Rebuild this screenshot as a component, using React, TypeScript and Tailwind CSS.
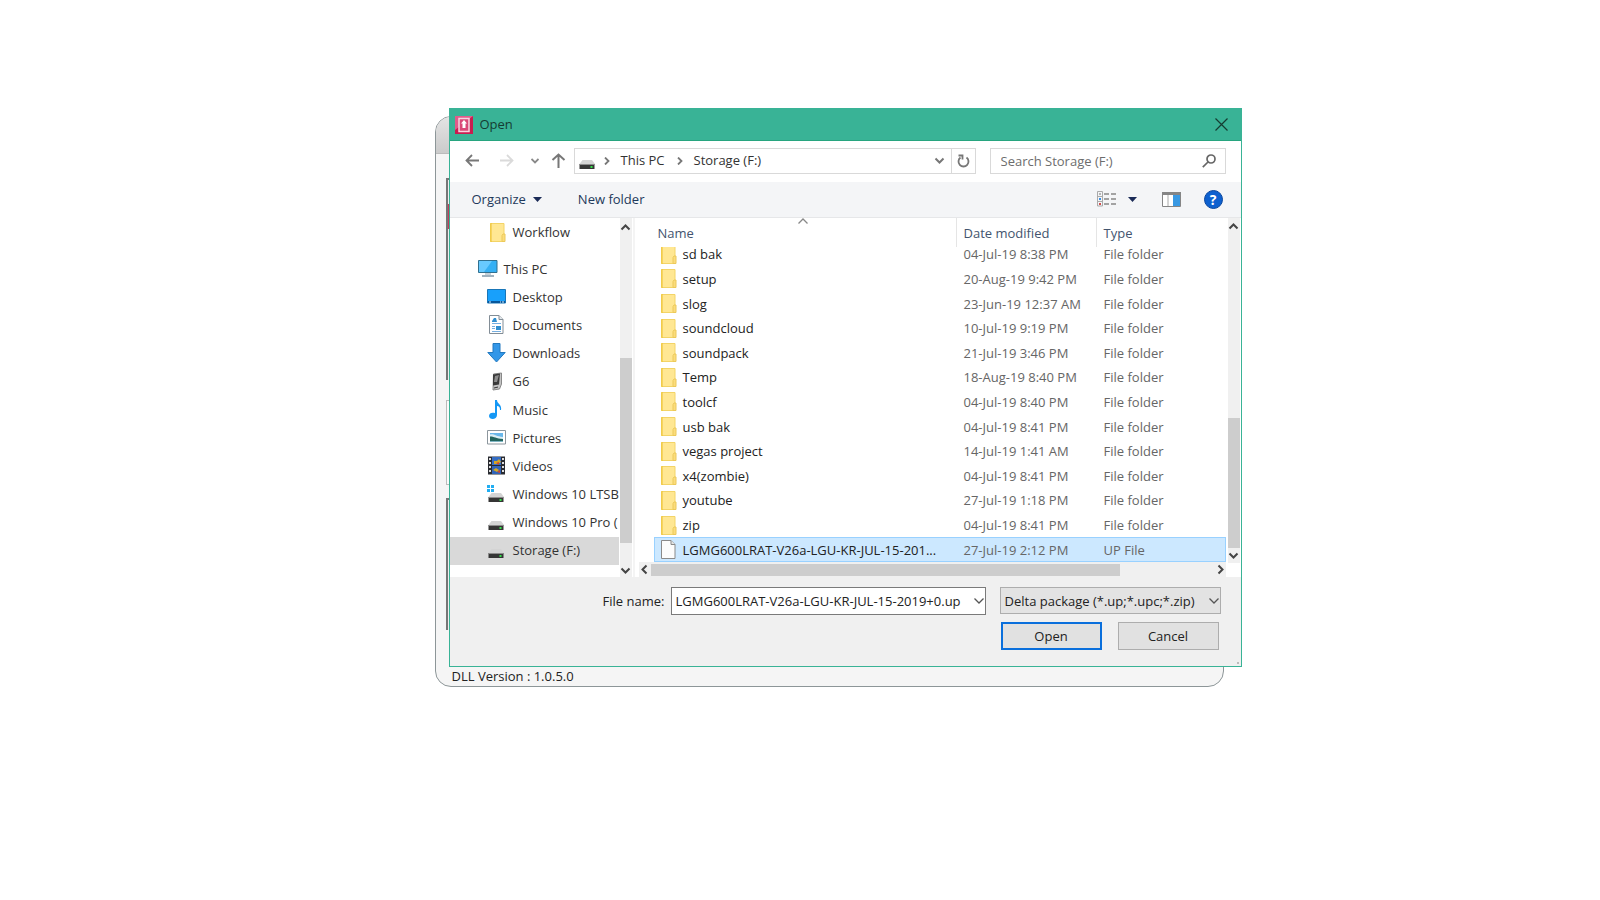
import type { ReactNode } from "react";

const NAV_ITEMS = [
  { label: "This PC", icon: "pc", root: true },
  { label: "Desktop", icon: "desktop" },
  { label: "Documents", icon: "document" },
  { label: "Downloads", icon: "download" },
  { label: "G6", icon: "phone" },
  { label: "Music", icon: "music" },
  { label: "Pictures", icon: "picture" },
  { label: "Videos", icon: "video" },
  { label: "Windows 10 LTSB", icon: "windrive" },
  { label: "Windows 10 Pro (", icon: "drive" },
  { label: "Storage (F:)", icon: "drive", selected: true },
];

const FILES = [
  ["sd bak", "04-Jul-19 8:38 PM"],
  ["setup", "20-Aug-19 9:42 PM"],
  ["slog", "23-Jun-19 12:37 AM"],
  ["soundcloud", "10-Jul-19 9:19 PM"],
  ["soundpack", "21-Jul-19 3:46 PM"],
  ["Temp", "18-Aug-19 8:40 PM"],
  ["toolcf", "04-Jul-19 8:40 PM"],
  ["usb bak", "04-Jul-19 8:41 PM"],
  ["vegas project", "14-Jul-19 1:41 AM"],
  ["x4(zombie)", "04-Jul-19 8:41 PM"],
  ["youtube", "27-Jul-19 1:18 PM"],
  ["zip", "04-Jul-19 8:41 PM"],
];

function FolderIcon() {
  return (
    <svg width="16" height="19" viewBox="0 0 16 19" className="shrink-0">
      <path d="M.5.5h13.500v18H.5z" fill="#ffe793" stroke="#f3d467" />
      <path d="M1 0v19" stroke="#eec22f" />
      <path d="M12 18.500v-6l1-1.500h2v7.500z" fill="#fbdc7c" stroke="#ecc95a" />
    </svg>
  );
}

function FileIcon() {
  return (
    <svg width="16" height="19" viewBox="0 0 16 19" className="shrink-0">
      <path d="M.5.5h9.500l4 4v14H.5z" fill="#fcfcfc" stroke="#8a8a8a" />
      <path d="M10 .5v4h4" fill="#e4e4e4" stroke="#8a8a8a" />
    </svg>
  );
}

function DriveIcon({ windows = false }: { windows?: boolean }) {
  return (
    <svg width="18" height="18" viewBox="0 0 18 18" className="shrink-0">
      {windows && <path d="M0 0h3v3H0zM4 0h3v3H4zM0 4h3v3H0zM4 4h3v3H4z" fill="#22aef2" />}
      <path d="M4.500 8h9.500l3 4H1.500z" fill="#d4d4d4" />
      <path d="M1.500 12h15v5h-15z" fill="#353535" />
      <path d="M1.500 12h15v1h-15z" fill="#8c8c8c" />
      <path d="M12.500 14h2v2h-2z" fill="#35e04a" />
    </svg>
  );
}

function NavIcon({ name }: { name: string }) {
  switch (name) {
    case "folder":
      return <FolderIcon />;
    case "drive":
      return <DriveIcon />;
    case "windrive":
      return <DriveIcon windows />;
    case "pc":
      return (
        <svg width="20" height="18" viewBox="0 0 20 18" className="shrink-0">
          <path d="M.5.5h18.500v12H.5z" fill="#35b0f4" stroke="#31708f" />
          <path d="M1 1h13L6 12H1z" fill="#68caff" />
          <path d="M7 13h6v2H7z" fill="#c5d0d8" />
          <path d="M4 16h12" stroke="#8199aa" strokeWidth="1.500" />
        </svg>
      );
    case "desktop":
      return (
        <svg width="19" height="15" viewBox="0 0 19 15" className="shrink-0">
          <path d="M.5.5h18v13.500H.5z" fill="#18a0fb" stroke="#1976b8" />
          <path d="M1 12h17v2H1z" fill="#07569a" />
          <path d="M2 13h2M13 13h1M15 13h2" stroke="#d6efff" />
        </svg>
      );
    case "document":
      return (
        <svg width="19" height="19" viewBox="0 0 19 19" className="shrink-0">
          <path d="M2.500.5h9.500l4 4v14H2.500z" fill="#fff" stroke="#828d96" />
          <path d="M12 .5v4h4" fill="#e3e8ec" stroke="#828d96" />
          <path d="M5 6l2-3h2l1 4H5zM9 11h5v4H9z" fill="#318fd0" />
          <path d="M5 8.500h9M5 11.500h3M5 13.500h3M5 16.500h9" stroke="#75aee0" />
        </svg>
      );
    case "download":
      return (
        <svg width="19" height="20" viewBox="0 0 19 20" className="shrink-0">
          <path d="M6 .5h7v9h5.200L9.500 19 .8 9.500H6z" fill="#3397e8" stroke="#2279c0" />
        </svg>
      );
    case "phone":
      return (
        <svg width="19" height="19" viewBox="0 0 19 19" className="shrink-0">
          <path d="M6.500 2l8-1v11l-2 5-6.500 1z" fill="#c4c4c4" stroke="#888" />
          <path d="M6 2.500l7-1-1 11-6 1z" fill="#3a3a3a" />
          <path d="M8 4l4-1-2 7H7z" fill="#8d8d8d" />
          <path d="M7 16l4-1" stroke="#333" />
        </svg>
      );
    case "music":
      return (
        <svg width="19" height="19" viewBox="0 0 19 19" className="shrink-0">
          <path d="M8 0h2c0 4 5 4 4 10h-1c0-3-1-4-3-4v9c0 5-8 5-8 1 0-3 3-4 6-3z" fill="#1598f5" />
        </svg>
      );
    case "picture":
      return (
        <svg width="19" height="15" viewBox="0 0 19 15" className="shrink-0">
          <path d="M.5.5h18v13.500H.5z" fill="#fff" stroke="#8c969d" />
          <path d="M3 3h13v9H3z" fill="#69b7ea" />
          <path d="M3 4.500c4-1 6 2 13 2.500v2H3z" fill="#dbeef4" />
          <path d="M3 6.500c4 0 6 2 13 2.500v3H3z" fill="#23655e" />
          <path d="M3 11h13v1H3z" fill="#7fb6c4" />
        </svg>
      );
    default:
      return (
        <svg width="19" height="19" viewBox="0 0 19 19" className="shrink-0">
          <path d="M1 .5h17v18H1z" fill="#292b31" />
          <path d="M5 1h9v8H5z" fill="#356ec5" />
          <path d="M5 10h9v8H5z" fill="#3064ba" />
          <path d="M7 5h3l2-2 2 3-3 2H7zM6 14l3-2 3 2-2 2z" fill="#d3a826" />
          <path d="M9 7l3-1v3zM10 16l3-2v3z" fill="#d34333" />
          <path d="M3 2v16M16 2v16" stroke="#ddd" strokeWidth="2" strokeDasharray="2 2" />
        </svg>
      );
  }
}

function Chevron({ dir, className = "" }: { dir: "up" | "down" | "left" | "right"; className?: string }) {
  const paths = {
    up: "M1.500 7.500 5.500 3.500 9.500 7.500",
    down: "M1.500 3.500 5.500 7.500 9.500 3.500",
    left: "M7.500 1.500 3.500 5.500 7.500 9.500",
    right: "M3.500 1.500 7.500 5.500 3.500 9.500",
  };
  return (
    <svg width="11" height="11" viewBox="0 0 11 11" fill="none" stroke="currentColor" strokeWidth="2" className={`shrink-0 ${className}`}>
      <path d={paths[dir]} />
    </svg>
  );
}

function IconButton({ label, className = "", children }: { label: string; className?: string; children: ReactNode }) {
  return (
    <button type="button" aria-label={label} className={`flex items-center justify-center ${className}`}>
      {children}
    </button>
  );
}

function BackWindow() {
  return (
    <div className="absolute top-2 right-[18px] -bottom-5 -left-[14px] flex flex-col overflow-hidden rounded-2xl border border-[#8d9698] bg-[#f5f5f5]">
      <div className="h-[37px] border-b border-[#bbb] bg-linear-to-b from-[#e4e4e4] to-[#cbcbcb]" />
      <div className="flex flex-1 flex-col px-[10px] pt-6">
        <div className="h-[202px] border-2 border-r-0 border-b-0 border-[#777] bg-[#eee] pt-6">
          <div className="h-[25px] bg-[#c43d5c]" />
        </div>
        <div className="mt-5 h-[85px] border border-[#bbb] bg-[#fafafa]" />
        <div className="mt-[13px] h-[132px] border-2 border-r-0 border-b-0 border-[#777] bg-[#eee]" />
      </div>
      <p className="h-[18px] pl-4 leading-4 text-[#222]">DLL Version : 1.0.5.0</p>
    </div>
  );
}

function TitleBar() {
  return (
    <div className="flex h-8 items-center border-b border-[#27a57f] bg-[#39b396] pl-[5px] text-[#153c32]">
      <svg width="18" height="18" viewBox="0 0 18 18">
        <path d="M0 0h18v18H0z" fill="#c91c50" />
        <path d="M0 0h18L0 14z" fill="#e25b8b" />
        <path d="M4 2.500h10v13H4z" fill="#d94978" stroke="#f6d5e0" strokeWidth="1.500" />
        <path d="M9 4l3 3.500h-1.500V12h-3V7.500H6z" fill="#fff" />
      </svg>
      <h1 className="ml-[7px] flex-1 pb-[2px]">Open</h1>
      <IconButton label="Close" className="h-full w-[38px]">
        <svg width="13" height="13" viewBox="0 0 13 13" fill="none" stroke="currentColor" strokeWidth="1.200">
          <path d="M.5.5l12 12M12.500.5l-12 12" />
        </svg>
      </IconButton>
    </div>
  );
}

function AddressRow() {
  return (
    <div className="flex h-[41px] items-center px-[15px] pb-[2px] text-[#777]">
      <IconButton label="Back" className="w-4">
        <svg width="15" height="13" viewBox="0 0 15 13" fill="none" stroke="#777" strokeWidth="1.800">
          <path d="M7 1L1.500 6.500 7 12M1.500 6.500H14" />
        </svg>
      </IconButton>
      <IconButton label="Forward" className="ml-[18px] w-4">
        <svg width="15" height="13" viewBox="0 0 15 13" fill="none" stroke="#dadada" strokeWidth="1.800">
          <path d="M8 1l5.500 5.500L8 12M13.500 6.500H1" />
        </svg>
      </IconButton>
      <IconButton label="Recent locations" className="ml-3 w-4">
        <svg width="8" height="6" viewBox="0 0 8 6" fill="none" stroke="#888" strokeWidth="1.800">
          <path d="M.5 1L4 4.500 7.500 1" />
        </svg>
      </IconButton>
      <IconButton label="Up" className="ml-2 w-4">
        <svg width="15" height="15" viewBox="0 0 15 15" fill="none" stroke="#777" strokeWidth="2">
          <path d="M1.500 7L7.500 1.500 13.500 7M7.500 2v13" />
        </svg>
      </IconButton>
      <div className="ml-[7px] flex h-[26px] flex-1 items-center border border-[#d9d9d9] pl-[3px] text-[#333]">
        <DriveIcon />
        <svg width="6" height="8" viewBox="0 0 6 8" fill="none" stroke="#777" strokeWidth="1.800" className="ml-2">
          <path d="M1 .5L4.500 4 1 7.500" />
        </svg>
        <a href="#this-pc" className="ml-[11px] pb-[2px]">This PC</a>
        <svg width="6" height="8" viewBox="0 0 6 8" fill="none" stroke="#777" strokeWidth="1.800" className="ml-3">
          <path d="M1 .5L4.500 4 1 7.500" />
        </svg>
        <a href="#storage" className="ml-[11px] flex-1 pb-[2px]">Storage (F:)</a>
        <IconButton label="Previous locations" className="h-full w-[22px]">
          <Chevron dir="down" className="text-[#777]" />
        </IconButton>
        <IconButton label="Refresh" className="h-full w-6 border-l border-[#d9d9d9]">
          <svg width="13" height="14" viewBox="0 0 13 14" fill="none" stroke="#777" strokeWidth="1.800">
            <path d="M9.500 3.500a5 5 0 1 1-6 0M1.500 1.500h4v4" />
          </svg>
        </IconButton>
      </div>
      <div className="ml-[14px] flex h-[26px] w-[236px] items-center border border-[#d9d9d9] pr-[9px] pl-[10px]">
        <input aria-label="Search Storage (F:)" placeholder="Search Storage (F:)" className="min-w-0 flex-1 outline-none placeholder:text-[#6d6d6d]" />
        <svg width="14" height="14" viewBox="0 0 14 14" fill="none" stroke="#666" strokeWidth="1.700">
          <circle cx="9" cy="5" r="4" />
          <path d="M6 8L.8 13.200" />
        </svg>
      </div>
    </div>
  );
}

function Toolbar() {
  return (
    <div className="flex h-9 items-center border-b border-[#e6e7e9] bg-[#f4f5f7] pr-[18px] pb-px pl-[22px] text-[#1e395b]">
      <button type="button" className="flex items-center">
        Organize
        <svg width="9" height="5" viewBox="0 0 9 5" className="ml-[7px]">
          <path d="M0 0h9L4.500 5z" fill="#1b2b57" />
        </svg>
      </button>
      <button type="button" className="ml-9">New folder</button>
      <IconButton label="Change your view" className="ml-auto">
        <svg width="20" height="16" viewBox="0 0 20 16" fill="none">
          <path d="M.5.5h5v14.500h-5zM.5 5.500h5M.5 10.500h5" stroke="#aaa" />
          <path d="M3 2v2" stroke="#777" />
          <path d="M3 7v2" stroke="#398ee5" strokeWidth="2" />
          <path d="M3 12v2" stroke="#d04e4e" strokeWidth="2" />
          <path d="M7 3h5M14 3h5M7 8h5M14 8h5M7 13h5M14 13h5" stroke="#888" strokeWidth="1.300" />
        </svg>
      </IconButton>
      <IconButton label="More options" className="ml-[11px]">
        <svg width="9" height="5" viewBox="0 0 9 5">
          <path d="M0 0h9L4.500 5z" fill="#1b2b57" />
        </svg>
      </IconButton>
      <IconButton label="Show the preview pane" className="ml-[25px]">
        <svg width="19" height="15" viewBox="0 0 19 15">
          <path d="M.5.5h18v14H.5z" fill="#fff" stroke="#858585" />
          <path d="M0 0h19v3H0z" fill="#858585" />
          <path d="M6 3v11" stroke="#aaa" />
          <path d="M11 3h7v11h-7z" fill="#3999e3" />
        </svg>
      </IconButton>
      <button type="button" aria-label="Get help" className="ml-[23px] size-[19px] rounded-full border border-[#0a479f] bg-[#0d60cf] text-center text-[14px] leading-[17px] font-bold text-white">
        ?
      </button>
    </div>
  );
}

function NavPane() {
  return (
    <nav aria-label="Folders" className="flex w-[183px] shrink-0">
      <div className="w-[169px] overflow-hidden whitespace-nowrap">
        <a href="#workflow" className="flex h-7 items-center pl-10">
          <NavIcon name="folder" />
          <span className="ml-[7px]">Workflow</span>
        </a>
        <ul className="mt-[9px] flex h-[310px] flex-col">
          {NAV_ITEMS.map((item) => (
            <li key={item.label} className={`flex-1 ${item.selected ? "bg-[#d9d9d9]" : ""}`}>
              <a href="#folder" className={`flex h-full items-center pb-px ${item.root ? "pl-7" : "pl-[37px]"}`}>
                <span className="flex w-[26px] shrink-0"><NavIcon name={item.icon} /></span>
                {item.label}
              </a>
            </li>
          ))}
        </ul>
      </div>
      <div className="ml-px flex w-3 flex-col items-center bg-[#f0f0f0] text-[#444]">
        <Chevron dir="up" className="mt-1" />
        <div className="mt-[125px] h-[185px] w-full bg-[#cdcdcd]" />
        <Chevron dir="down" className="mt-auto mb-px" />
      </div>
    </nav>
  );
}

function FileList() {
  return (
    <div className="flex min-w-0 flex-1 border-l-2 border-[#f4f4f4] pl-1">
      <div className="min-w-0 flex-1">
        <div className="relative grid h-[29px] grid-cols-[1fr_140px_130px] text-[#43546e]">
          <svg width="10" height="6" viewBox="0 0 10 6" fill="none" stroke="#888" strokeWidth="1.300" className="absolute top-0 left-[159px]">
            <path d="M.5 5.500L5 1l4.500 4.500" />
          </svg>
          <button type="button" className="pl-[19px] text-left">Name</button>
          <button type="button" className="border-l border-[#e5e5e5] pl-[7px] text-left">Date modified</button>
          <button type="button" className="border-l border-[#e5e5e5] pl-[7px] text-left">Type</button>
        </div>
        {/* scrolled to the end, so the first row sits partly under the header */}
        <div className="flex h-[315px] flex-col justify-end overflow-hidden pl-[15px]">
          <table aria-label="Files" className="h-[320px] w-full shrink-0 table-fixed border-collapse whitespace-nowrap text-[#666]">
            <colgroup>
              <col />
              <col className="w-[140px]" />
              <col className="w-[130px]" />
            </colgroup>
            <tbody>
              {FILES.map(([name, date]) => (
                <tr key={name}>
                  <td className="p-0 pl-[7px] text-[#222]">
                    <div className="flex items-center gap-[6px]"><FolderIcon />{name}</div>
                  </td>
                  <td className="p-0 pl-2">{date}</td>
                  <td className="p-0 pl-2">File folder</td>
                </tr>
              ))}
              <tr className="bg-[#cce8ff] outline outline-offset-[-1px] outline-[#99d1ff]">
                <td className="p-0 pl-[7px] text-[#222]">
                  <div className="flex items-center gap-[6px]">
                    <FileIcon />
                    <span>LGMG600LRAT-V26a-LGU-KR-JUL-15-201...</span>
                  </div>
                </td>
                <td className="p-0 pl-2">27-Jul-19 2:12 PM</td>
                <td className="p-0 pl-2">UP File</td>
              </tr>
            </tbody>
          </table>
        </div>
        <div className="flex h-[15px] items-center bg-[#f0f0f0] text-[#444]">
          <Chevron dir="left" />
          <div className="ml-px h-3 w-[469px] bg-[#cdcdcd]" />
          <Chevron dir="right" className="ml-auto" />
        </div>
      </div>
      <div className="ml-[2px] flex w-3 flex-col pb-[14px]">
        <div className="flex flex-1 flex-col items-center bg-[#f0f0f0] text-[#444]">
          <Chevron dir="up" className="mt-[3px]" />
          <div className="mt-auto h-[130px] w-full bg-[#cdcdcd]" />
          <Chevron dir="down" className="mt-[2px] mb-[2px]" />
        </div>
      </div>
      <div className="w-px" />
    </div>
  );
}

function Footer() {
  return (
    <div className="relative flex h-[89px] flex-col bg-[#f0f0f0] pt-[10px] pr-5 text-[#222]">
      <div className="flex items-start justify-end">
        <label htmlFor="file-name" className="mr-[6px] leading-7">File name:</label>
        <div className="flex h-7 w-[315px] items-center border border-[#7a7a7a] bg-white pl-1">
          <input id="file-name" defaultValue="LGMG600LRAT-V26a-LGU-KR-JUL-15-2019+0.up" className="min-w-0 flex-1 outline-none" />
          <IconButton label="Previous file names" className="w-3">
            <svg width="10" height="6" viewBox="0 0 10 6" fill="none" stroke="#555" strokeWidth="1.300">
              <path d="M.5.5L5 5 9.500.5" />
            </svg>
          </IconButton>
        </div>
        <div className="relative ml-[14px] w-[221px]">
          <select aria-label="File type" className="h-[27px] w-full appearance-none border border-[#adadad] bg-[#e3e3e3] pl-1 outline-none">
            <option>Delta package (*.up;*.upc;*.zip)</option>
          </select>
          <svg width="10" height="6" viewBox="0 0 10 6" fill="none" stroke="#555" strokeWidth="1.300" className="pointer-events-none absolute top-[11px] right-[2px]">
            <path d="M.5.5L5 5 9.500.5" />
          </svg>
        </div>
      </div>
      <div className="mt-[7px] flex justify-end gap-4 pr-[2px]">
        <button type="button" className="h-7 w-[101px] border-2 border-[#0a6fdc] bg-[#e1e1e1]">Open</button>
        <button type="button" className="h-7 w-[101px] border border-[#adadad] bg-[#e1e1e1]">Cancel</button>
      </div>
      <span className="absolute right-[2px] bottom-[2px] size-[2px] bg-[#bbb]" />
    </div>
  );
}

export default function App() {
  return (
    <main className="min-h-screen bg-white pt-[108px] pl-[90px] font-['Open_Sans',sans-serif] text-[13px] leading-4">
      <div className="relative mx-auto w-full max-w-[793px]">
        <BackWindow />
        <section role="dialog" aria-label="Open" className="relative border border-[#39b396] bg-white">
          <TitleBar />
          <AddressRow />
          <Toolbar />
          <div className="flex h-[359px] text-[#333]">
            <NavPane />
            <FileList />
          </div>
          <Footer />
        </section>
      </div>
    </main>
  );
}
